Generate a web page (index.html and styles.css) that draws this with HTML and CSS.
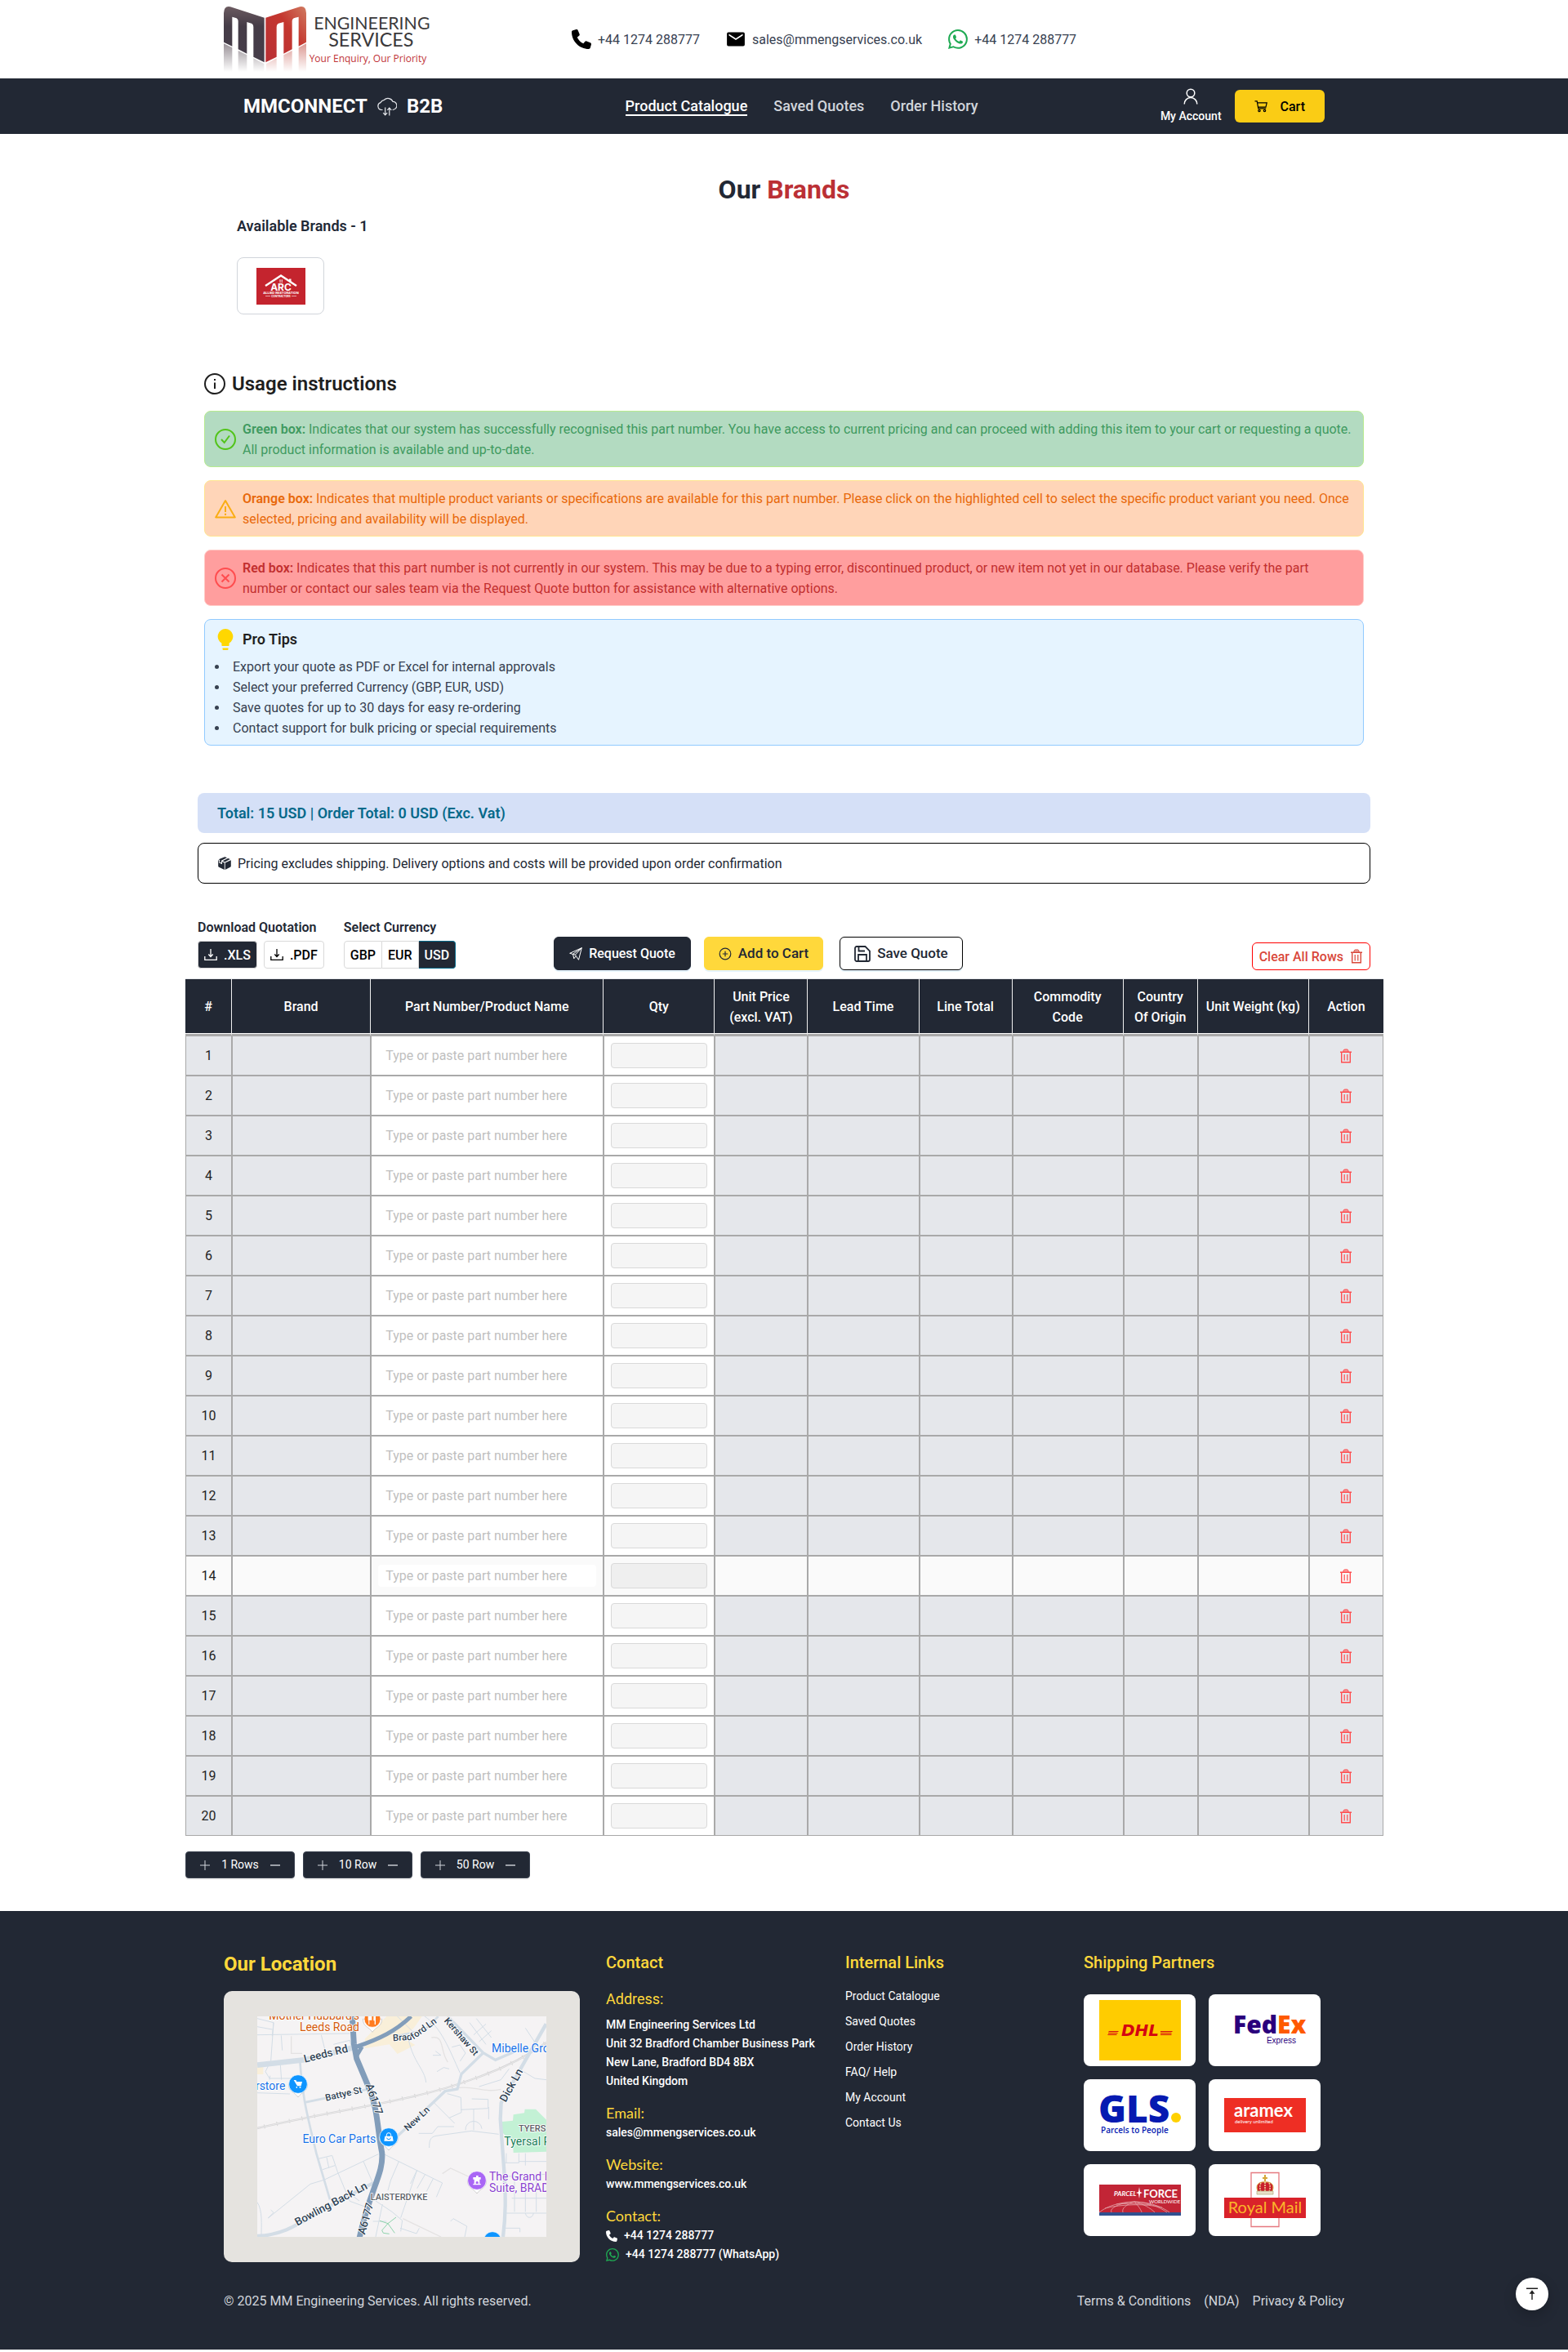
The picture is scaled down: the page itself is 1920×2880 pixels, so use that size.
FILE: index.html
```html
<!DOCTYPE html>
<html lang="en">
<head>
<meta charset="utf-8">
<meta name="viewport" content="width=device-width, initial-scale=1">
<title>MMConnect B2B - Product Catalogue</title>
<link rel="stylesheet" href="styles.css">
</head>
<body>
<svg class="sprite" aria-hidden="true">
  <symbol id="i-phone" viewBox="0 0 512 512"><path fill="currentColor" d="M164.900 24.600c-7.700-18.600-28-28.500-47.400-23.200l-88 24C12.100 30.200 0 46 0 64C0 311.400 200.600 512 448 512c18 0 33.800-12.100 38.600-29.500l24-88c5.300-19.400-4.600-39.700-23.200-47.400l-96-40c-16.300-6.800-35.200-2.100-46.300 11.600L304.700 368C234.300 334.700 177.300 277.700 144 207.300L193.300 167c13.700-11.200 18.400-30 11.600-46.300l-40-96z"/></symbol>
  <symbol id="i-mail" viewBox="0 0 24 24"><path fill="currentColor" d="M21 3.500H3c-1.100 0-1.900.9-1.900 2v13c0 1.100.8 2 1.900 2h18c1.100 0 1.900-.9 1.900-2v-13c0-1.100-.8-2-1.900-2zm-.5 4L12 13 3.500 7.500V5.400L12 11l8.500-5.600z"/></symbol>
  <symbol id="i-whatsapp" viewBox="0 0 16 16"><path fill="currentColor" d="M13.601 2.326A7.850 7.850 0 0 0 7.994 0C3.627 0 .068 3.558.064 7.926c0 1.399.366 2.760 1.057 3.965L0 16l4.204-1.102a7.900 7.900 0 0 0 3.790.965h.004c4.368 0 7.926-3.558 7.930-7.930A7.900 7.900 0 0 0 13.600 2.326zM7.994 14.521a6.600 6.600 0 0 1-3.356-.92l-.24-.144-2.494.654.666-2.433-.156-.251a6.560 6.560 0 0 1-1.007-3.505c0-3.626 2.957-6.584 6.591-6.584a6.560 6.560 0 0 1 4.660 1.931 6.560 6.560 0 0 1 1.928 4.660c-.004 3.639-2.961 6.592-6.592 6.592m3.615-4.934c-.197-.099-1.170-.578-1.353-.646-.182-.065-.315-.099-.445.099-.133.197-.513.646-.627.775-.114.133-.232.148-.43.05-.197-.1-.836-.308-1.592-.985-.59-.525-.985-1.175-1.103-1.372-.114-.198-.011-.304.088-.403.087-.088.197-.232.296-.346.1-.114.133-.198.198-.33.065-.134.034-.248-.015-.347-.05-.099-.445-1.076-.612-1.470-.16-.389-.323-.335-.445-.34-.114-.007-.247-.007-.38-.007a.73.73 0 0 0-.529.247c-.182.198-.691.677-.691 1.654s.71 1.916.81 2.049c.098.133 1.394 2.132 3.383 2.992.47.205.84.326 1.129.418.475.152.904.129 1.246.08.38-.058 1.171-.48 1.338-.943.164-.464.164-.86.114-.943-.049-.084-.182-.133-.38-.232"/></symbol>
  <symbol id="i-trash" viewBox="0 0 16 18"><g fill="none" stroke="currentColor"><path fill="currentColor" fill-opacity=".5" d="M5 4V2.200L6.200 1h3.600L11 2.200V4"/><path stroke-width="1.400" d="M1 4.200h14M2.700 4.500v12.300h10.600V4.500"/><path stroke-width="1.200" d="M6.200 7v7.500M9.800 7v7.500"/></g></symbol>
  <symbol id="i-download" viewBox="0 0 16 16"><path fill="none" stroke="currentColor" stroke-width="1.300" d="M.8 10v4.300h14.400V10M8 1v9M5.300 7.500L8 10.500l2.700-3"/></symbol>
  <symbol id="i-plus" viewBox="0 0 14 14"><path stroke="currentColor" d="M7 1v12M1 7h12"/></symbol>
  <symbol id="i-minus" viewBox="0 0 14 14"><path stroke="currentColor" stroke-width="1.400" d="M1 7h12"/></symbol>
</svg>

<header>
  <div class="container topbar">
    <a href="#" class="logo" aria-label="MM Engineering Services">
      <svg viewBox="42 24 768 240" width="256" height="80">
        <defs>
          <linearGradient id="dark" x1="0" y1="0" x2="0" y2="1"><stop offset="0" stop-color="#6b5a60"/><stop offset=".35" stop-color="#453c47"/><stop offset="1" stop-color="#463d4a"/></linearGradient>
          <linearGradient id="red" x1="1" y1="0" x2="0" y2="1"><stop offset="0" stop-color="#d07a60"/><stop offset=".4" stop-color="#c4372f"/><stop offset="1" stop-color="#b92f35"/></linearGradient>
          <linearGradient id="fadeDark" gradientUnits="userSpaceOnUse" x1="0" y1="160" x2="0" y2="264"><stop offset="0" stop-color="#9a9298"/><stop offset="1" stop-color="#fff"/></linearGradient>
          <linearGradient id="fadeRed" gradientUnits="userSpaceOnUse" x1="0" y1="160" x2="0" y2="264"><stop offset="0" stop-color="#dc9a94"/><stop offset="1" stop-color="#fff"/></linearGradient>
        </defs>
        <path fill="url(#dark)" d="M42 48Q43 20 66 25L191 65V229L151 209V100Q151 87 139 85L127 81V197L95 181V78Q95 67 84 65L73 62V170L42 155Z"/>
        <path fill="url(#red)" d="M345 48Q344 20 321 25L196 65V229L236 209V100Q236 87 248 85L262 81V197L293 181V78Q293 67 304 65L317 62V170L345 155Z"/>
        <path fill="url(#fadeDark)" d="M42 160L73 175V264H42ZM95 186L127 202V264H95ZM151 214L190 234V264H151Z"/>
        <path fill="url(#fadeRed)" d="M345 160L317 175V264H345ZM293 186L262 202V264H293ZM236 214L198 234V264H236Z"/>
        <g fill="#3b3a3c" font-family="Lato, sans-serif" text-anchor="middle"><text x="586" y="107" font-size="64">ENGINEERING</text><text x="583" y="172" font-size="70">SERVICES</text></g>
        <text x="356" y="228" font-size="36" fill="#bf3438" font-family="'Open Sans', sans-serif">Your Enquiry, Our Priority</text>
      </svg>
    </a>
    <address class="contacts">
      <a href="tel:+441274288777"><svg width="24" height="24"><use href="#i-phone"/></svg><span>+44 1274 288777</span></a>
      <a href="mailto:sales@mmengservices.co.uk"><svg width="24" height="24"><use href="#i-mail"/></svg><span>sales@mmengservices.co.uk</span></a>
      <a href="#"><svg class="wa" width="24" height="24"><use href="#i-whatsapp"/></svg><span>+44 1274 288777</span></a>
    </address>
  </div>
  <div class="navbar">
    <div class="container navbar-inner">
      <a href="#" class="wordmark"><span>MMCONNECT</span>
        <svg width="24" height="24" viewBox="0 0 24 24" fill="none" stroke="currentColor" stroke-width="1.200"><path d="M6.500 16.500H5.200A4.600 4.600 0 0 1 3.900 7.600 6.300 6.300 0 0 1 8.500 4.300 6.500 6.500 0 0 1 19 6.300a5 5 0 0 1 1.500 9.700l-1.800.5"/><path d="M9.700 13.500v9M7.200 20.200l2.500 2.600 2.500-2.600M14.800 23.500v-9M12.300 16.800l2.500-2.600 2.500 2.600"/></svg>
        <span>B2B</span></a>
      <nav class="links" aria-label="Main">
        <a href="#" class="current">Product Catalogue</a><a href="#">Saved Quotes</a><a href="#">Order History</a>
      </nav>
      <div class="user">
        <a href="#" class="account"><svg width="20" height="20" viewBox="0 0 20 20" fill="none" stroke="currentColor" stroke-width="1.500"><circle cx="10" cy="6" r="4.800"/><path d="M2.200 19.500c0-4.300 3.300-8 7.800-8s7.800 3.700 7.800 8"/></svg><span>My Account</span></a>
        <button class="cart"><svg width="16" height="16" viewBox="0 0 16 16" fill="none" stroke="currentColor" stroke-width="1.200"><path d="M.5 1.800h2.700l1.600 9h9.400M3.500 3.800h11.700l-1.200 5.300H4.500"/><circle cx="6" cy="13.500" r="1.200"/><circle cx="12.500" cy="13.500" r="1.200"/></svg><span>Cart</span></button>
      </div>
    </div>
  </div>
</header>

<main>
  <section class="brands">
    <h1>Our <span>Brands</span></h1>
    <h2>Available Brands - 1</h2>
    <a href="#" class="brand-card" aria-label="ARC">
      <svg width="60" height="45" viewBox="0 0 60 45"><rect width="60" height="45" fill="#c4242e"/><path d="M11 22L30 9.500 49 22" fill="none" stroke="#fff" stroke-width="2.400"/><path d="M40 13.500h2.500v5L40 17zM28.300 14.500h1.400v1.300h-1.400zm2.300 0H32v1.300h-1.400zm-2.300 2h1.400v1.300h-1.400zm2.300 0H32v1.300h-1.400z" fill="#fff"/><g fill="#fff" font-family="Inter, sans-serif" text-anchor="middle"><text x="30" y="28" font-size="12" font-weight="700">ARC</text><text x="30" y="32" font-size="4" font-weight="700">ALLIED RESTORATION</text><text x="30" y="36" font-size="3" font-weight="700">CONTRACTORS</text></g><path d="M11 34.500h6M43 34.500h6" stroke="#fff" stroke-width=".6"/></svg>
    </a>
  </section>

  <section class="usage">
    <h2><svg width="26" height="26" viewBox="0 0 26 26" fill="none" stroke="currentColor" stroke-width="2"><circle cx="13" cy="13" r="12"/><path d="M13 11.500V19M13 7v2"/></svg>Usage instructions</h2>
    <div class="note note-green">
      <svg width="26" height="26" viewBox="0 0 26 26" fill="none" stroke="currentColor" stroke-width="2"><circle cx="13" cy="13" r="12"/><path d="M8 13l3.700 4L18 8.500"/></svg>
      <p><b>Green box:</b> Indicates that our system has successfully recognised this part number. You have access to current pricing and can proceed with adding this item to your cart or requesting a quote. All product information is available and up-to-date.</p>
    </div>
    <div class="note note-orange">
      <svg width="26" height="26" viewBox="0 0 26 26" fill="none" stroke="currentColor" stroke-width="2"><path stroke-linejoin="round" d="M13 3L1.200 23.500h23.600z"/><path d="M13 10v7M13 18.800v2.200"/></svg>
      <p><b>Orange box:</b> Indicates that multiple product variants or specifications are available for this part number. Please click on the highlighted cell to select the specific product variant you need. Once selected, pricing and availability will be displayed.</p>
    </div>
    <div class="note note-red">
      <svg width="26" height="26" viewBox="0 0 26 26" fill="none" stroke="currentColor" stroke-width="2"><circle cx="13" cy="13" r="12"/><path d="M8.500 8.500l9 9M17.500 8.500l-9 9"/></svg>
      <p><b>Red box:</b> Indicates that this part number is not currently in our system. This may be due to a typing error, discontinued product, or new item not yet in our database. Please verify the part number or contact our sales team via the Request Quote button for assistance with alternative options.</p>
    </div>
    <div class="tips">
      <h3><svg width="26" height="26" viewBox="0 0 26 26" fill="#ffd700"><path d="M13 0a9.300 9.300 0 0 0-4.600 17.400V20c0 .6.400 1 1 1h7.200c.6 0 1-.4 1-1v-2.600A9.300 9.300 0 0 0 13 0zM9.500 23.500h7v1.200c0 .8-.5 1.300-1.300 1.300h-4.400c-.8 0-1.300-.5-1.300-1.300z"/></svg>Pro Tips</h3>
      <ul>
        <li>Export your quote as PDF or Excel for internal approvals</li>
        <li>Select your preferred Currency (GBP, EUR, USD)</li>
        <li>Save quotes for up to 30 days for easy re-ordering</li>
        <li>Contact support for bulk pricing or special requirements</li>
      </ul>
    </div>
  </section>

  <section class="order">
    <p class="total">Total: 15 USD | Order Total: 0 USD (Exc. Vat)</p>
    <p class="shipping"><svg width="16" height="16" viewBox="0 0 16 16" fill="currentColor"><path d="M8.300.2L11 1.300 4 4.800v2.700L2.200 6.700V3.900L.7 3.300zM12.200 1.900l2.700 1.200L8.300 6.500 5.600 5.300zM.2 4.200l1.100.5v2.900L5 9.200V6.300l2.800 1.200V16L1 12.800c-.5-.3-.8-.6-.8-1.200zM15.800 4.200v7.400c0 .6-.3.900-.8 1.200L8.700 16V7.600z"/></svg>Pricing excludes shipping. Delivery options and costs will be provided upon order confirmation</p>

    <div class="toolbar">
      <div class="tool-group">
        <span class="tool-label" id="dl">Download Quotation</span>
        <div class="downloads" role="group" aria-labelledby="dl">
          <button class="dl dark"><svg width="16" height="16"><use href="#i-download"/></svg>.XLS</button>
          <button class="dl"><svg width="16" height="16"><use href="#i-download"/></svg>.PDF</button>
        </div>
      </div>
      <div class="tool-group">
        <span class="tool-label" id="cur">Select Currency</span>
        <div class="currency" role="group" aria-labelledby="cur">
          <button>GBP</button><button>EUR</button><button class="active" aria-pressed="true">USD</button>
        </div>
      </div>
      <div class="actions">
        <button class="act act-dark"><svg width="16" height="16" viewBox="0 0 16 16" fill="none" stroke="currentColor"><path d="M.7 7.300L15.300.7 11.500 15.300 7.400 9.200zM15.300.7L7.400 9.200M15.300.7L4.500 8.300l1.300 5.500 2.500-3.200"/></svg>Request Quote</button>
        <button class="act act-yellow"><svg width="16" height="16" viewBox="0 0 16 16" fill="none" stroke="currentColor" stroke-width="1.200"><circle cx="8" cy="8" r="6.800"/><path d="M8 4.800v6.400M4.800 8h6.400"/></svg>Add to Cart</button>
        <button class="act act-outline"><svg width="20" height="20" viewBox="0 0 20 20" fill="none" stroke="currentColor" stroke-width="1.800"><path d="M3 1h10.500L19 6.500V17a2 2 0 0 1-2 2H3a2 2 0 0 1-2-2V3a2 2 0 0 1 2-2z"/><path d="M5 19v-8h10v8M5.500 1v5.500H13"/></svg>Save Quote</button>
      </div>
      <button class="clear">Clear All Rows<svg width="16" height="18"><use href="#i-trash"/></svg></button>
    </div>

    <div class="sheet">
      <table>
        <colgroup><col class="c-no"><col class="c-brand"><col class="c-part"><col class="c-mid"><col class="c-price"><col class="c-mid"><col class="c-price"><col class="c-mid"><col class="c-small"><col class="c-mid"><col class="c-small"></colgroup>
        <thead><tr><th>#</th><th>Brand</th><th>Part Number/Product Name</th><th>Qty</th><th>Unit Price (excl. VAT)</th><th>Lead Time</th><th>Line Total</th><th>Commodity Code</th><th>Country Of Origin</th><th>Unit Weight (kg)</th><th>Action</th></tr></thead>
        <tbody id="rows"></tbody>
      </table>
      <div class="row-tools">
        <div class="stepper"><button aria-label="Add 1 row" data-step="1"><svg width="14" height="14"><use href="#i-plus"/></svg></button><span>1 Rows</span><button aria-label="Remove 1 row" data-step="-1"><svg width="14" height="14"><use href="#i-minus"/></svg></button></div>
        <div class="stepper"><button aria-label="Add 10 rows" data-step="10"><svg width="14" height="14"><use href="#i-plus"/></svg></button><span>10 Row</span><button aria-label="Remove 10 rows" data-step="-10"><svg width="14" height="14"><use href="#i-minus"/></svg></button></div>
        <div class="stepper"><button aria-label="Add 50 rows" data-step="50"><svg width="14" height="14"><use href="#i-plus"/></svg></button><span>50 Row</span><button aria-label="Remove 50 rows" data-step="-50"><svg width="14" height="14"><use href="#i-minus"/></svg></button></div>
      </div>
    </div>
  </section>
</main>

<footer>
  <div class="container footer-grid">
    <section class="location">
      <h2>Our Location</h2>
      <div class="map">
        <svg viewBox="165 267 1062 810" role="img" aria-label="Map of Laisterdyke, Bradford">
          <rect x="165" y="267" width="1062" height="810" fill="#f5f3f4"/>
          <path fill="#f9efd9" d="M560 350L640 267H770L740 310 700 345 745 372 680 405 650 370 560 385zM165 452h22v28h-22z"/>
          <path fill="#c3f1d5" d="M1064 654l40-4 2-22 40-6 2-14h40l40 40v116l-122 4-2-36-40-40z"/>
          <g fill="none" stroke="#d3dde6" stroke-width="3">
            <path d="M165 275l60 15-5 50M225 290l-10 140-20 40 15 25h115M165 305l55 10M165 335l340-5M253 337l4 55M400 335l15 60M445 370l60-15 5 20M505 267l-70 10M250 445l4 55M210 500l2-15"/>
            <path d="M165 548l120 4M205 1008l155-125 50-15 200-95M205 1008l20-20-10-10M390 790l50-12 20 60 45 108 55 20M405 830l45-15M420 785l8 38"/>
            <path d="M630 773l215 106-22 52M752 832l-24 50M782 847l-30 52M812 862l-25 48M752 832l-60 175M685 800l-30 70-10 36M555 800l35 80M600 1077l25-120M600 945l60 40 38 32-6 40M590 1020l50 0"/>
            <path d="M758 697h50l20-25h60M870 640l-55-55M870 640l20 20M870 640l45-20-2-55-50-14M913 610l100-5v-33l-60-2M960 607v78M930 685a30 30 0 0 1 60-5M1015 600v45M797 750c0-20 0-40 25-44l130-18 100 12"/>
            <path d="M780 267c60 40 90 120 130 208M810 410h30l-20-15M825 470l25-15 20 5M880 380l30-8 20 30-20 30M945 290l60 80M970 275l55 70M1005 295l-45 40M1025 320l-45 40M980 525l80-25 30-40M1135 465l50 30 42 5"/>
            <path d="M1066 805h60M1080 770v35M1126 770v35M1126 800h101M1150 770v45M1085 855l142-8M1100 935h127M1080 990h147M1110 855v130M1150 850v135M1190 845v140M1150 990a16 24 0 0 0 30 0M1075 1045l55 0 0 15M875 1020l10-10 50 28-10 50M165 950c20 30 15 80 15 127"/>
            <path d="M690 1045l60 20 10-20M520 930l20 15M680 267l60 60M590 360l80-35M720 350c20 90 60 110 65 160M1150 310l40 60"/>
          </g>
          <path stroke="#e4e2e2" stroke-width="4" fill="none" d="M290 340v63h40M805 345c50-10 30 50 60 90M845 845l30-20 65 30M700 1010l140 67M900 530c60-10 100 20 160 5"/>
          <path stroke="#8fd3ac" stroke-width="3" fill="none" d="M615 1018l30 10 25 35M675 1005l-30 23-22 25 5 10 22 3"/>
          <g stroke="#d5d5d6" fill="none"><path stroke-width="7" d="M165 678c300-70 580-100 790-180 90-30 180-70 272-135"/><path stroke-width="16" stroke-dasharray="3 44" d="M190 672c290-67 560-97 765-174 90-30 180-70 272-135"/><path stroke="#f5f3f4" stroke-width="2" d="M165 678c300-70 580-100 790-180 90-30 180-70 272-135"/></g>
          <g fill="none" stroke="#d3dde6">
            <path stroke-width="20" d="M165 446l180-20 175-45"/><path stroke-width="8" d="M322 430c10 150 30 210 60 340l50 170M340 583l230-48M830 267l-50 50-115 25"/>
            <path stroke-width="10" d="M675 712l180-170 45-8 15-55 80-78-130-134M995 401l45 26 70-30"/><path stroke-width="13" d="M165 1074c130-4 180-75 425-194M1226 295l-165 290-3 60 14 190c6 100 6 160-4 242"/>
          </g>
          <g fill="none" stroke="#829dba"><path stroke-width="21" d="M514 267l6 100 10 55 40 95c40 90 35 160 53 250 8 80-48 140-86 330"/><path stroke-width="15" d="M525 380c90-30 150-60 205-113M520 380l12 28 18-30"/></g>
          <g stroke-width="2" stroke="#fff">
            <g fill="#ff7c20"><path fill="#fff" stroke="#bbb" d="M553 277c0 28 22 28 35 48 13-20 35-20 35-48z"/><circle cx="588" cy="277" r="30"/></g>
            <g fill="#0e95ff"><path fill="#fff" stroke="#bbb" d="M280 516c0 28 22 28 35 48 13-20 35-20 35-48zM613 711c0 28 22 28 35 48 13-20 35-20 35-48z"/><circle cx="315" cy="516" r="34"/><circle cx="648" cy="711" r="34"/><circle cx="1029" cy="1090" r="32"/></g>
            <g><path fill="#fff" stroke="#bbb" d="M937 870c0 28 22 28 35 48 13-20 35-20 35-48z"/><circle fill="#a966f5" cx="972" cy="870" r="34"/></g>
          </g>
          <g fill="#fff"><path d="M299 501h8l3 6h20l-4 16h-14zM308 525h4v5h-4zM320 525h5v5h-5zM634 707h28l3 18h-34zM958 882h4v-16h-4v-8h11v-6h8v6h9v8h-4v16h4v4h-28zM574 267h3v30h-3zM582 267h4v14h-14v-14M596 267h4v30h-4zM592 267h6v16h-6z"/></g>
          <path fill="none" stroke="#fff" stroke-width="3" d="M640 708v-5a8 8 0 0 1 16 0v5"/><path fill="none" stroke="#0e95ff" stroke-width="3" d="M641 713a7 6 0 0 0 14 0"/><path fill="#a966f5" d="M968 882v-6a5 5 0 0 1 9 0v6z"/>
          <g class="map-text">
            <g fill="#d45a0b" text-anchor="end"><text x="540" y="280">Mother Hubbard's</text><text x="540" y="321">Leeds Road</text></g>
            <g fill="#1a73e8"><text x="1026" y="399">Mibelle Gro</text><text x="268" y="538" text-anchor="end">rstore</text><text x="601" y="733" text-anchor="end">Euro Car Parts</text></g>
            <g fill="#8b43cf"><text x="1017" y="871">The Grand B</text><text x="1017" y="912">Suite, BRAD</text></g>
            <text x="1072" y="741" fill="#188058">Tyersal P</text>
            <g class="area" fill="#5c6268"><text x="581" y="941">LAISTERDYKE</text><text x="1125" y="689">TYERS</text></g>
            <g class="road" fill="#2f4254">
              <text transform="translate(418 578) rotate(-13)">Battye St</text>
              <text transform="translate(664 358) rotate(-4)">Brad</text><text transform="translate(739 353) rotate(-36)">ford Ln</text>
              <text transform="translate(850 284) rotate(49)">Kershaw St</text><text transform="translate(718 690) rotate(-43)">New Ln</text>
            </g>
            <g class="main-road" fill="#2f4254">
              <text transform="translate(340 437) rotate(-14)">Leeds Rd</text><text transform="translate(1078 584) rotate(-61)">Dick Ln</text>
              <text transform="translate(563 520) rotate(71)">A6177</text><text transform="translate(560 1070) rotate(-74)">A6177</text>
              <text transform="translate(312 1037) rotate(-28)">Bowling Back Ln</text>
            </g>
          </g>
        </svg>
      </div>
    </section>
    <section class="contact">
      <h2>Contact</h2>
      <h3>Address:</h3>
      <p>MM Engineering Services Ltd<br>Unit 32 Bradford Chamber Business Park<br>New Lane, Bradford BD4 8BX<br>United Kingdom</p>
      <h3 class="alt">Email:</h3>
      <p><a href="mailto:sales@mmengservices.co.uk">sales@mmengservices.co.uk</a></p>
      <h3 class="alt">Website:</h3>
      <p><a href="#">www.mmengservices.co.uk</a></p>
      <h3 class="alt">Contact:</h3>
      <p class="line"><svg width="14" height="14"><use href="#i-phone"/></svg><a href="tel:+441274288777">+44 1274 288777</a></p>
      <p class="line"><svg class="wa" width="16" height="16"><use href="#i-whatsapp"/></svg><a href="#">+44 1274 288777 (WhatsApp)</a></p>
    </section>
    <nav class="internal" aria-label="Internal links">
      <h2>Internal Links</h2>
      <a href="#">Product Catalogue</a><a href="#">Saved Quotes</a><a href="#">Order History</a><a href="#">FAQ/ Help</a><a href="#">My Account</a><a href="#">Contact Us</a>
    </nav>
    <section class="partners">
      <h2>Shipping Partners</h2>
      <div class="partner-grid">
        <svg viewBox="0 0 137 88"><rect x="19" y="7" width="100" height="74" fill="#fc0"/><text x="69" y="51" text-anchor="middle" font-family="'DejaVu Sans'" font-style="italic" font-weight="700" font-size="20" fill="#d40511">DHL</text><path fill="#d40511" d="M31 45h12l-1 1H30zM30 47h12l-1 1H30zM30 49h11l-1 1H29zM94 45h15l-1 1H94zM94 47h14l-1 1H94zM94 49h14l-1 1H94z"/></svg>
        <svg viewBox="0 0 137 88"><text x="30" y="48" font-family="'Open Sans'" font-weight="800" font-size="30" fill="#2a007c">Fed<tspan fill="#ff5a00">Ex</tspan></text><text x="107" y="60" text-anchor="end" font-family="'Liberation Sans'" font-size="10" fill="#2a007c">Express</text></svg>
        <svg viewBox="0 0 137 88"><text x="18" y="53" font-family="'Open Sans'" font-weight="800" font-size="46" fill="#061ab1">GLS</text><circle cx="113" cy="47" r="6" fill="#ffd100"/><text x="21" y="66" font-family="'Open Sans'" font-weight="600" font-size="10" fill="#061ab1">Parcels to People</text></svg>
        <svg viewBox="0 0 137 88"><rect x="19" y="23" width="100" height="42" fill="#ee2e24"/><text x="31" y="46" font-family="Lato" font-weight="700" font-size="22" fill="#fff">aramex</text><text x="32" y="54" font-family="Lato" font-size="6" fill="#fff">delivery unlimited</text></svg>
        <svg viewBox="0 0 137 88"><rect x="19" y="25" width="100" height="38" fill="#c22536"/><path fill="#31508f" d="M19 59h100v4H19z"/><path fill="none" stroke="#e6a5ab" stroke-width=".8" d="M19 59c20-16 62-18 86 0M34 59c-3-5 10-12 28-13M48 59c-2-5 5-10 14-13M62 46c10 2 20 8 25 13M62 46c15 0 32 7 40 13M62 46c3 3 8 9 9 13M26 54c20-5 50-6 70-1M40 49c12-1 30-1 42 1"/><g fill="#fff" font-family="Lato"><text x="37" y="39" font-size="8" font-style="italic" font-weight="700">PARCEL</text><text x="73" y="41" font-size="13" font-weight="700">FORCE</text><text x="80" y="48" font-size="6">WORLDWIDE</text></g><path fill="#fff" d="M68 28l1 6 3 1-3 1-1 6-1-6-3-1 3-1z"/></svg>
        <svg viewBox="0 0 137 88"><path fill="none" stroke="#e5797f" stroke-width="1.300" d="M52 10.500h34V76.500H52z"/><path fill="#d9222a" d="M19 41h100v25H19z"/><text x="69" y="60" text-anchor="middle" font-family="Lato" font-size="20" fill="#f9b52a">Royal Mail</text><path fill="#d6a63b" d="M68 13h2v3h2v2h-2v3h-2v-3h-2v-2h2z"/><path fill="#c9202b" stroke="#d9ad45" d="M61 35c-5-9 0-14 8-13 8-1 13 4 8 13z"/><path fill="none" stroke="#f0dca0" stroke-width="1.500" stroke-dasharray="2 1" d="M69 22v12M64 23c-2 4-1 8 0 11M74 23c2 4 1 8 0 11"/><path fill="#e8e0c8" stroke="#a99d6c" stroke-width=".6" d="M59 33h20v4H59z"/></svg>
      </div>
    </section>
  </div>
  <div class="container legal">
    <span>© 2025 MM Engineering Services. All rights reserved.</span>
    <nav aria-label="Legal"><a href="#">Terms &amp; Conditions</a><a href="#">(NDA)</a><a href="#">Privacy &amp; Policy</a></nav>
  </div>
  <button class="to-top" aria-label="Back to top"><svg width="16" height="16" viewBox="0 0 16 16" fill="none" stroke="currentColor" stroke-width="1.400"><path d="M1 1.200h14M8 15V5M6 7l2-2.600L10 7z"/></svg></button>
</footer>
<script src="rows.js"></script>
</body>
</html>
```
FILE: styles.css
```css
*, *::before, *::after { box-sizing: border-box; }
body { margin: 0; background: #fff; color: #222834; font-family: Roboto, "Liberation Sans", sans-serif; font-size: 16px; line-height: 25px; }
h1, h2, h3, p, ul { margin: 0; padding: 0; }
a { color: inherit; text-decoration: none; }
button, input { font: inherit; color: inherit; }
button { cursor: pointer; margin: 0; }
svg { display: block; flex: none; }
.sprite { display: none; }
.container { max-width: 1372px; margin: 0 auto; }
.wa { color: #1faa53; }

/* Header */
.topbar { display: flex; align-items: center; gap: 170px; height: 96px; }
.contacts { display: flex; gap: 32px; font-style: normal; color: #374151; }
.contacts a { display: flex; align-items: center; gap: 8px; }
.contacts svg { color: #000; }
.contacts .wa { color: #1faa53; }
.navbar { background: #222834; color: #fff; }
.navbar-inner { display: flex; align-items: center; justify-content: space-between; height: 68px; padding: 0 24px; }
.wordmark { display: flex; align-items: center; gap: 12px; font-size: 24px; font-weight: 700; }
.wordmark svg { color: #e5e7eb; }
.links { display: flex; gap: 32px; font-size: 18px; font-weight: 500; line-height: 24px; color: #d1d5db; }
.links .current { color: #fff; box-shadow: inset 0 -2px 0 #fff; }
.user { display: flex; align-items: center; gap: 16px; }
.account { display: flex; flex-direction: column; align-items: center; gap: 4px; font-size: 14px; font-weight: 500; line-height: 20px; }
.cart { display: flex; align-items: center; gap: 16px; height: 40px; padding: 0 24px; border: 0; border-radius: 6px; background: #facc15; color: #000; font-weight: 500; }

/* Brands */
.brands { max-width: 1340px; margin: 0 auto; padding-top: 48px; }
.brands h1 { text-align: center; font-size: 32px; font-weight: 700; line-height: 40px; }
.brands h1 span { color: #bb3035; }
.brands h2 { margin: 11px 0 24px; font-size: 18px; font-weight: 600; line-height: 28px; color: #1f2937; }
.brand-card { display: flex; align-items: center; justify-content: center; width: 107px; height: 70px; border: 1px solid #d1d5db; border-radius: 8px; }

/* Usage instructions */
.usage { display: flex; flex-direction: column; gap: 16px; max-width: 1420px; margin: 68px auto 0; color: #1f1f1f; }
.usage h2 { display: flex; align-items: center; gap: 8px; font-size: 24px; font-weight: 600; line-height: 34px; }
.note { display: flex; align-items: center; gap: 8px; padding: 9px 12px 8px; border: 1px solid; border-radius: 8px; }
.note b { font-weight: 600; }
.note-green { background: #b3dbc1; border-color: #b7eb8f; color: #52c41a; }
.note-green p { color: #3f9a60; }
.note-orange { background: #ffd5b8; border-color: #ffe58f; color: #faad14; }
.note-orange p { color: #e8690b; }
.note-red { background: #ff9e9e; border-color: #ffccc7; color: #ff4d4f; }
.note-red p { color: #c22f2f; }
.tips { padding: 11px 12px 8px; border: 1px solid #91caff; border-radius: 8px; background: #e6f4ff; }
.tips h3 { display: flex; align-items: center; gap: 8px; margin-bottom: 8px; font-size: 18px; font-weight: 600; line-height: 26px; }
.tips ul { list-style: disc inside; color: #374151; }

/* Order sheet */
.order { max-width: 1436px; margin: 58px auto 0; }
.total { padding: 12px 24px; border-radius: 8px; background: #d5e0f7; color: #06698a; font-size: 18px; font-weight: 600; }
.shipping { display: flex; align-items: center; gap: 8px; height: 50px; margin-top: 12px; padding: 0 24px; border: 1px solid #000; border-radius: 8px; }
.toolbar { display: flex; align-items: flex-end; margin-top: 42px; }
.tool-group { margin: 0 24px 2px 0; }
.tool-label { display: block; margin-bottom: 4px; font-weight: 600; line-height: 24px; }
.downloads { display: flex; gap: 8px; }
.dl, .currency button { height: 34px; border: 1px solid #d9d9d9; background: #fff; color: #000; font-weight: 500; }
.dl { display: flex; align-items: center; gap: 8px; padding: 0 7px; border-radius: 4px; }
.dl.dark, .currency .active { background: #222834; color: #fff; }
.currency { display: flex; }
.currency button { padding: 0 7px; }
.currency button + button { border-left: 0; }
.currency button:first-child { border-radius: 4px 0 0 4px; }
.currency button:last-child { border-radius: 0 4px 4px 0; }
.currency .active { border-color: #06698a; }
.actions { display: flex; gap: 16px; margin-left: 96px; }
.act { display: flex; align-items: center; gap: 8px; height: 41px; padding: 0 18px; border: 1px solid #222834; border-radius: 6px; font-weight: 500; box-shadow: 0 2px 0 #e6f4ff; }
.act-dark { background: #222834; color: #fff; }
.act-yellow { padding: 0 17px; border-color: #ffd83b; background: #ffd83b; font-size: 17px; }
.act-outline { margin-left: 4px; padding: 0 17px; border-color: #000; background: #fff; font-size: 17px; }
.clear { display: flex; align-items: center; gap: 8px; height: 34px; margin-left: auto; padding: 0 8px; border: 1px solid #f00; border-radius: 6px; background: #fff; color: #d9483b; font-weight: 500; }

.sheet { margin: 10px -16px 0 -15px; }
table { width: 100%; table-layout: fixed; border-collapse: separate; border-spacing: 0; }
.c-no { width: 57px; } .c-brand { width: 170px; } .c-part { width: 285px; } .c-mid { width: 136px; } .c-price { width: 114px; } .c-small { width: 91px; }
th { height: 70px; padding: 8px; background: #222834; border-top: 1px solid #e5e7eb; border-right: 1px solid #f0f0f0; border-bottom: 2px solid #a9a9a9; box-shadow: inset 0 -1px 0 #fff; color: #fff; font-weight: 500; }
th:last-child { border-right: 0; }
td { height: 49px; padding: 8px; border: 1px solid #a9a9a9; background: #e5e7eb; text-align: center; line-height: 24px; color: #1f1f1f; }
td.edit { background: #fff; }
td input { display: block; width: 100%; border: 1px solid transparent; border-radius: 4px; outline: 0; }
td .part { height: 27px; padding: 0 8px; background: #fff; }
td .part::placeholder { color: #bfbfbf; opacity: 1; }
td .qty { height: 31px; border-color: #d9d9d9; background: #f5f5f5; }
tr.hover td { background: #fafafa; }
tr.hover .qty { background: #efefef; }
.remove { display: block; margin: 0 auto; padding: 0; border: 0; background: none; color: #ff4d4f; }
.row-tools { display: flex; gap: 10px; margin-top: 19px; }
.stepper { display: flex; align-items: center; justify-content: space-between; width: 134px; height: 33px; padding: 0 16px; border: 1px solid #3b4250; border-radius: 4px; background: #222834; color: #fff; font-size: 14px; box-shadow: 0 2px 0 #f0f0f0; }
.stepper button { padding: 0; border: 0; background: none; color: #d1d5db; }

/* Footer */
footer { position: relative; margin-top: 40px; padding: 48px 0 47px; background: #222834; color: #fff; }
.footer-grid { display: grid; grid-template-columns: 436fr 261fr 260fr 319fr; gap: 32px; font-size: 14px; line-height: 23px; }
.footer-grid h2 { color: #ffd83b; font-size: 20px; font-weight: 500; line-height: 30px; }
.footer-grid .location h2 { font-size: 24px; font-weight: 700; line-height: 34px; }
.map { margin-top: 16px; padding: 31px 41px; border-radius: 10px; background: #e5e3df; }
.map svg { width: 100%; height: auto; }
.map-text { font-size: 42px; font-weight: 400; paint-order: stroke; stroke: #fff; stroke-width: 5px; stroke-linejoin: round; }
.map-text .area { font-size: 33px; font-weight: 500; }
.map-text .road { font-size: 34px; font-weight: 500; }
.map-text .main-road { font-size: 40px; font-weight: 500; }
.contact p { font-weight: 500; }
.contact h3 { margin-top: 16px; color: #ffd83b; font-size: 18px; font-weight: 400; line-height: 28px; }
.contact h3 + p { margin-top: 6px; }
.contact h3.alt { margin-top: 14px; font-family: Lato, sans-serif; line-height: 26px; }
.contact h3.alt + p { margin-top: 0; }
.line { display: flex; align-items: center; gap: 8px; }
.internal a { display: block; margin-bottom: 8px; }
.internal h2 { margin-bottom: 15px; }
.partner-grid { display: grid; grid-template-columns: 137px 137px; gap: 16px; margin-top: 24px; }
.partner-grid svg { width: 137px; height: 88px; border-radius: 8px; background: #fff; }
.legal { display: flex; justify-content: space-between; margin-top: 33px; color: #d1d5db; }
.legal nav { display: flex; gap: 16px; }
.to-top { position: absolute; right: 24px; bottom: 48px; display: grid; place-items: center; width: 40px; height: 40px; padding: 0; border: 0; border-radius: 50%; background: #fff; color: #1f1f1f; box-shadow: 0 6px 16px rgba(0, 0, 0, .2); }
```
FILE: rows.js
```js
const body = document.getElementById('rows');
const highlighted = 14;
let count = 20;

function render() {
  let html = '';
  for (let n = 1; n <= count; n++) {
    html += `<tr${n === highlighted ? ' class="hover"' : ''}><td>${n}</td><td></td>
      <td class="edit"><input class="part" type="text" aria-label="Part number, row ${n}" placeholder="Type or paste part number here"></td>
      <td class="edit"><input class="qty" type="text" aria-label="Quantity, row ${n}" disabled></td>
      ${'<td></td>'.repeat(6)}
      <td><button class="remove" aria-label="Remove row ${n}"><svg width="16" height="18"><use href="#i-trash"/></svg></button></td></tr>`;
  }
  body.innerHTML = html;
}

document.querySelectorAll('[data-step]').forEach((button) => {
  button.addEventListener('click', () => {
    count = Math.max(1, count + Number(button.dataset.step));
    render();
  });
});

render();
```
